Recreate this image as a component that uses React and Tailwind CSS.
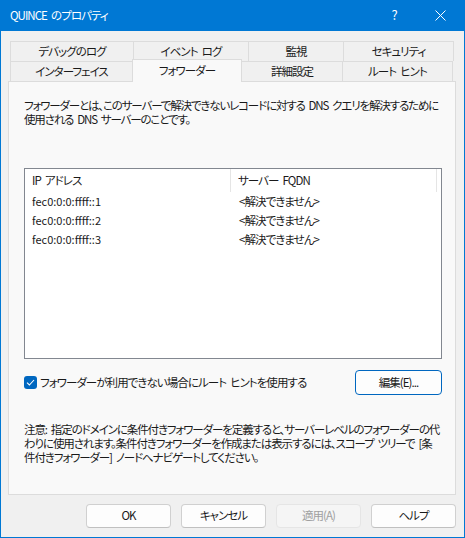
import React from "react";

const font = "font-['Noto_Sans_CJK_JP',sans-serif] [font-feature-settings:'palt']";

function Tab({ label, w, first }) {
  return (
    <div
      className={`h-[20px] ${w} flex items-center justify-center border-t border-r border-[#dcdcdc] bg-[#f0f0f0] text-[#1a1a1a] ${first ? "border-l" : ""}`}
    >
      {label}
    </div>
  );
}

function Btn({ children, disabled, accent, w = "w-[85px]", h = "h-[24px]" }) {
  return (
    <div
      className={`${w} ${h} rounded-[4px] border flex items-center justify-center ${
        disabled
          ? "bg-[#f5f5f5] border-[#e5e5e5] text-[#a0a0a0]"
          : accent
          ? "bg-[#fdfdfd] border-[#0067c0] text-[#1a1a1a]"
          : "bg-[#fdfdfd] border-[#d0d0d0] border-b-[#c0c0c0] text-[#1a1a1a]"
      }`}
    >
      {children}
    </div>
  );
}

export default function App() {
  const rows = ["fec0:0:0:ffff::1", "fec0:0:0:ffff::2", "fec0:0:0:ffff::3"];
  return (
    <div className={`w-[465px] h-[538px] bg-[#0078d4] flex flex-col px-px pb-px text-[11.5px] tracking-[-0.95px] [word-spacing:2.5px] ${font}`}>
      {/* Title bar */}
      <div className="h-[31px] flex items-center text-white shrink-0">
        <div className="pl-[9px] flex-1">QUINCE のプロパティ</div>
        <div className="w-[46px] flex justify-center text-[13px] -mt-px">?</div>
        <div className="w-[46px] flex justify-center mr-[1px]">
          <svg width="11" height="11" viewBox="0 0 11 11">
            <path d="M0.5 0.5 L10.5 10.5 M10.5 0.5 L0.5 10.5" stroke="white" strokeWidth="1" />
          </svg>
        </div>
      </div>

      {/* Body */}
      <div className="flex-1 bg-[#f0f0f0] flex flex-col pt-[10px] pl-[7px] pr-[8px]">
        {/* Tabs */}
        <div className="pl-[2px]">
          <div className="flex">
            <Tab label="デバッグのログ" w="w-[124px]" first />
            <Tab label="イベント ログ" w="w-[115px]" />
            <Tab label="監視" w="w-[95px]" />
            <Tab label="セキュリティ" w="w-[110px]" />
          </div>
          <div className="flex h-[20px] items-start">
            <Tab label="インターフェイス" w="w-[123px]" first />
            <div className="relative z-10 -mt-[2px] h-[23px] w-[110px] -ml-px border-t border-x border-[#dcdcdc] bg-[#f9f9f9] flex items-center justify-center text-[#1a1a1a] pb-[1px]">
              フォワーダー
            </div>
            <Tab label="詳細設定" w="w-[101px]" />
            <Tab label="ルート ヒント" w="w-[110px]" />
          </div>
        </div>

        {/* Panel */}
        <div className="w-[448px] h-[414px] border border-[#dcdcdc] bg-[#f9f9f9] flex flex-col pt-[16px] pl-[15px] text-[#1a1a1a]">
          <div className="leading-[14px] whitespace-nowrap tracking-[-1.15px]">
            フォワーダーとは、このサーバーで解決できないレコードに対する DNS クエリを解決するために
            <br />
            使用される DNS サーバーのことです。
          </div>

          {/* List */}
          <div className="mt-[42px] w-[418px] h-[191px] border border-[#828790] bg-white flex flex-col">
            <div className="h-[23px] flex shrink-0">
              <div className="w-[206px] border-r border-[#e5e5e5] flex items-center pl-[7px]">IP アドレス</div>
              <div className="w-[206px] border-r border-[#e5e5e5] flex items-center pl-[7px]">サーバー FQDN</div>
            </div>
            {rows.map((r) => (
              <div key={r} className="h-[19px] flex items-center">
                <div className="w-[207px] pl-[7px] text-[11px] tracking-normal">{r}</div>
                <div className="pl-[7px]">&lt;解決できません&gt;</div>
              </div>
            ))}
          </div>

          {/* Checkbox + edit */}
          <div className="mt-[11px] w-[418px] flex items-center justify-between">
            <div className="flex items-center">
              <div className="w-[13px] h-[13px] rounded-[3px] bg-[#0067c0] flex items-center justify-center">
                <svg width="9" height="7" viewBox="0 0 9 7">
                  <path d="M1 3.6 L3.4 6 L8 1" stroke="white" strokeWidth="1.1" fill="none" />
                </svg>
              </div>
              <span className="ml-[3px]">フォワーダーが利用できない場合にルート ヒントを使用する</span>
            </div>
            <Btn accent w="w-[87px]" h="h-[25px]">編集(E)...</Btn>
          </div>

          <div className="mt-[27px] leading-[14px] whitespace-nowrap tracking-[-1.1px]">
            注意: 指定のドメインに条件付きフォワーダーを定義すると、サーバーレベルのフォワーダーの代
            <br />
            わりに使用されます。条件付きフォワーダーを作成または表示するには、スコープ ツリーで [条
            <br />
            件付きフォワーダー] ノードへナビゲートしてください。
          </div>
        </div>

        {/* Bottom buttons */}
        <div className="mt-[9px] flex justify-end gap-[10px]">
          <Btn>OK</Btn>
          <Btn>キャンセル</Btn>
          <Btn disabled>適用(A)</Btn>
          <Btn>ヘルプ</Btn>
        </div>
      </div>
    </div>
  );
}
